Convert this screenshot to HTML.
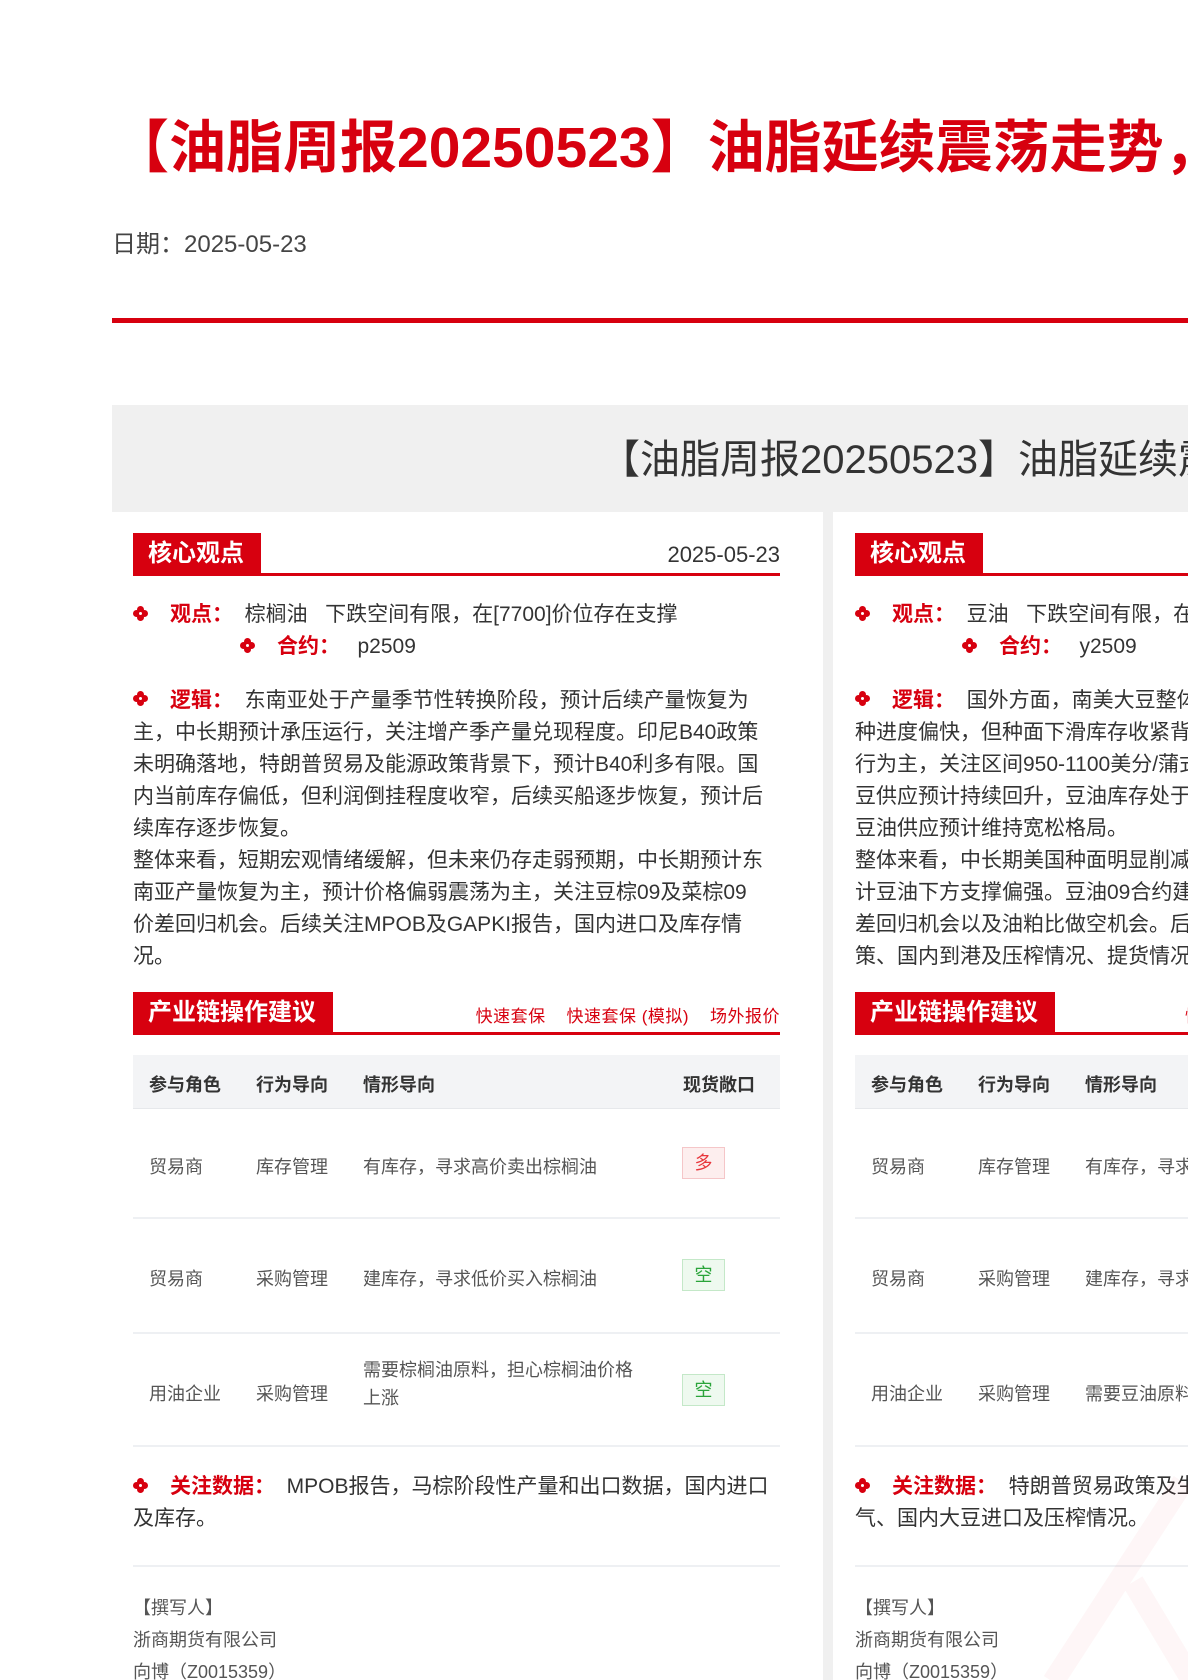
<!DOCTYPE html>
<html><head><meta charset="utf-8"><style>
*{margin:0;padding:0;box-sizing:border-box}
html,body{width:1188px;height:1680px;overflow:hidden;background:#fff}
body{position:relative;font-family:"Liberation Sans","Noto Sans CJK SC",sans-serif;color:#333}
.a{position:absolute;white-space:nowrap}
.red{color:#d7000f}
.card{position:absolute;top:512px;height:1168px;overflow:hidden;background:#fff}
.tag{position:absolute;background:#d7000f;color:#fff;font-weight:bold;font-size:24px;height:42px;line-height:42px;padding-left:15px}
.uline{position:absolute;height:3px;background:#d7000f}
.dia{position:absolute;width:15px;height:15px}
.lbl{color:#d7000f;font-weight:bold}
.p{font-size:21px;line-height:32px}
.th{position:absolute;background:#f3f4f6;height:54px;border-bottom:1px solid #e6e8eb}
.sep{position:absolute;height:2px;background:#eef0f3}
.t{font-size:18px;color:#555}
.badge{position:absolute;width:43px;height:32px;text-align:center;line-height:30px;font-size:18px;border:1px solid}
</style></head><body>
<div style="position:absolute;left:0;top:0;width:1188px;height:1680px;overflow:hidden">
<div class="a red" style="left:112px;top:113px;font-size:57px;font-weight:bold;line-height:70px">【油脂周报20250523】油脂延续震荡走势，关注产地供需变化</div>
<div class="a" style="left:112px;top:224px;font-size:24px;color:#444">日期：2025-05-23</div>
<div class="a" style="left:112px;top:318px;width:1076px;height:5px;background:#d7000f"></div>
<div class="a" style="left:112px;top:405px;width:1076px;height:107px;background:#f0f0f0"></div>
<div class="a" style="left:600px;top:434px;font-size:40px;color:#333;line-height:52px">【油脂周报20250523】油脂延续震荡走势</div>
<div class="a" style="left:112px;top:512px;width:1076px;height:1168px;background:#f0f0f0"></div>

<svg width="0" height="0" style="position:absolute"><defs><g id="d"><circle cx="7.5" cy="3.5" r="3.5" fill="#d7000f"/><circle cx="7.5" cy="11.5" r="3.5" fill="#d7000f"/><circle cx="3.5" cy="7.5" r="3.5" fill="#d7000f"/><circle cx="11.5" cy="7.5" r="3.5" fill="#d7000f"/><circle cx="7.5" cy="7.5" r="1.5" fill="#fff"/></g></defs></svg>

<!-- LEFT CARD -->
<div class="card" style="left:112px;width:711px">
 <div class="tag" style="left:21px;top:21px;width:128px">核心观点</div>
 <div class="uline" style="left:21px;top:61px;width:647px"></div>
 <div class="a" style="right:43px;top:30px;font-size:22px;color:#333">2025-05-23</div>
 <svg class="dia" style="left:21px;top:94px"><use href="#d"/></svg>
 <div class="a p" style="left:58px;top:87px"><span class="lbl">观点：</span>&nbsp;&nbsp;棕榈油&nbsp;&nbsp;&nbsp;下跌空间有限，在[7700]价位存在支撑</div>
 <svg class="dia" style="left:128px;top:126px"><use href="#d"/></svg>
 <div class="a p" style="left:165px;top:119px"><span class="lbl">合约：</span>&nbsp;&nbsp;&nbsp;p2509</div>
 <svg class="dia" style="left:21px;top:179px"><use href="#d"/></svg>
 <div class="a p" style="left:21px;top:173px"><span style="padding-left:37px" class="lbl">逻辑：</span>&nbsp;&nbsp;东南亚处于产量季节性转换阶段，预计后续产量恢复为<br>主，中长期预计承压运行，关注增产季产量兑现程度。印尼B40政策<br>未明确落地，特朗普贸易及能源政策背景下，预计B40利多有限。国<br>内当前库存偏低，但利润倒挂程度收窄，后续买船逐步恢复，预计后<br>续库存逐步恢复。<br>整体来看，短期宏观情绪缓解，但未来仍存走弱预期，中长期预计东<br>南亚产量恢复为主，预计价格偏弱震荡为主，关注豆棕09及菜棕09<br>价差回归机会。后续关注MPOB及GAPKI报告，国内进口及库存情<br>况。</div>
 <div class="tag" style="left:21px;top:480px;width:200px">产业链操作建议</div>
 <div class="uline" style="left:21px;top:520px;width:647px"></div>
 <div class="a red" style="right:43px;top:490px;font-size:17px;letter-spacing:0.5px">快速套保&nbsp;&nbsp;&nbsp;&nbsp;快速套保 (模拟)&nbsp;&nbsp;&nbsp;&nbsp;场外报价</div>
 <div class="th" style="left:21px;top:543px;width:647px"></div>
 <div class="a" style="left:37px;top:559px;font-size:18px;font-weight:bold">参与角色</div>
 <div class="a" style="left:144px;top:559px;font-size:18px;font-weight:bold">行为导向</div>
 <div class="a" style="left:251px;top:559px;font-size:18px;font-weight:bold">情形导向</div>
 <div class="a" style="left:571px;top:559px;font-size:18px;font-weight:bold">现货敞口</div>
 <div class="a t" style="left:37px;top:641px">贸易商</div><div class="a t" style="left:144px;top:641px">库存管理</div><div class="a t" style="left:251px;top:641px">有库存，寻求高价卖出棕榈油</div>
 <div class="badge" style="left:570px;top:635px;color:#e8363c;background:#fdeeee;border-color:#f5c6c8">多</div>
 <div class="sep" style="left:21px;top:705px;width:647px"></div>
 <div class="a t" style="left:37px;top:753px">贸易商</div><div class="a t" style="left:144px;top:753px">采购管理</div><div class="a t" style="left:251px;top:753px">建库存，寻求低价买入棕榈油</div>
 <div class="badge" style="left:570px;top:747px;color:#2aa43a;background:#eef9ef;border-color:#c4e8c8">空</div>
 <div class="sep" style="left:21px;top:820px;width:647px"></div>
 <div class="a t" style="left:37px;top:868px">用油企业</div><div class="a t" style="left:144px;top:868px">采购管理</div><div class="a t" style="left:251px;top:844px;line-height:28px">需要棕榈油原料，担心棕榈油价格<br>上涨</div>
 <div class="badge" style="left:570px;top:862px;color:#2aa43a;background:#eef9ef;border-color:#c4e8c8">空</div>
 <div class="sep" style="left:21px;top:933px;width:647px"></div>
 <svg class="dia" style="left:21px;top:966px"><use href="#d"/></svg>
 <div class="a p" style="left:21px;top:959px"><span style="padding-left:37px" class="lbl">关注数据：</span>&nbsp;&nbsp;MPOB报告，马棕阶段性产量和出口数据，国内进口<br>及库存。</div>
 <div class="sep" style="left:21px;top:1053px;width:647px"></div>
 <div class="a" style="left:21px;top:1080px;font-size:18px;line-height:32px;color:#555">【撰写人】<br>浙商期货有限公司<br>向博（Z0015359）</div>
</div>

<!-- RIGHT CARD -->
<div class="card" style="left:833px;width:355px">
 <div class="tag" style="left:22px;top:21px;width:128px">核心观点</div>
 <div class="uline" style="left:22px;top:61px;width:400px"></div>
 <svg class="dia" style="left:22px;top:94px"><use href="#d"/></svg>
 <div class="a p" style="left:59px;top:87px"><span class="lbl">观点：</span>&nbsp;&nbsp;豆油&nbsp;&nbsp;&nbsp;下跌空间有限，在[7800]价位存在支撑</div>
 <svg class="dia" style="left:129px;top:126px"><use href="#d"/></svg>
 <div class="a p" style="left:166px;top:119px"><span class="lbl">合约：</span>&nbsp;&nbsp;&nbsp;y2509</div>
 <svg class="dia" style="left:22px;top:179px"><use href="#d"/></svg>
 <div class="a p" style="left:22px;top:173px"><span style="padding-left:37px" class="lbl">逻辑：</span>&nbsp;&nbsp;国外方面，南美大豆整体丰产，美豆播<br>种进度偏快，但种面下滑库存收紧背景下，预计<br>行为主，关注区间950-1100美分/蒲式耳。国内<br>豆供应预计持续回升，豆油库存处于季节性回升<br>豆油供应预计维持宽松格局。<br>整体来看，中长期美国种面明显削减，生柴政策<br>计豆油下方支撑偏强。豆油09合约建议关注<br>差回归机会以及油粕比做空机会。后续关注<br>策、国内到港及压榨情况、提货情况。</div>
 <div class="tag" style="left:22px;top:480px;width:200px">产业链操作建议</div>
 <div class="uline" style="left:22px;top:520px;width:400px"></div>
 <div class="a red" style="left:352px;top:490px;font-size:17px">快速套保</div>
 <div class="th" style="left:22px;top:543px;width:400px"></div>
 <div class="a" style="left:38px;top:559px;font-size:18px;font-weight:bold">参与角色</div>
 <div class="a" style="left:145px;top:559px;font-size:18px;font-weight:bold">行为导向</div>
 <div class="a" style="left:252px;top:559px;font-size:18px;font-weight:bold">情形导向</div>
 <div class="a t" style="left:38px;top:641px">贸易商</div><div class="a t" style="left:145px;top:641px">库存管理</div><div class="a t" style="left:252px;top:641px">有库存，寻求高价卖出豆油</div>
 <div class="sep" style="left:22px;top:705px;width:400px"></div>
 <div class="a t" style="left:38px;top:753px">贸易商</div><div class="a t" style="left:145px;top:753px">采购管理</div><div class="a t" style="left:252px;top:753px">建库存，寻求低价买入豆油</div>
 <div class="sep" style="left:22px;top:820px;width:400px"></div>
 <div class="a t" style="left:38px;top:868px">用油企业</div><div class="a t" style="left:145px;top:868px">采购管理</div><div class="a t" style="left:252px;top:868px">需要豆油原料，担心豆油价格</div>
 <div class="sep" style="left:22px;top:933px;width:400px"></div>
 <svg class="dia" style="left:22px;top:966px"><use href="#d"/></svg>
 <div class="a p" style="left:22px;top:959px"><span style="padding-left:37px" class="lbl">关注数据：</span>&nbsp;&nbsp;特朗普贸易政策及生柴政策、美豆产区天<br>气、国内大豆进口及压榨情况。</div>
 <div class="sep" style="left:22px;top:1053px;width:400px"></div>
 <div class="a" style="left:22px;top:1080px;font-size:18px;line-height:32px;color:#555">【撰写人】<br>浙商期货有限公司<br>向博（Z0015359）</div>
 <svg class="a" style="left:100px;top:950px" width="260" height="220"><path d="M250 20 L120 220 M200 120 L260 220" stroke="#d7000f" stroke-opacity="0.035" stroke-width="22" fill="none"/></svg>
</div>
</div>
</body></html>
